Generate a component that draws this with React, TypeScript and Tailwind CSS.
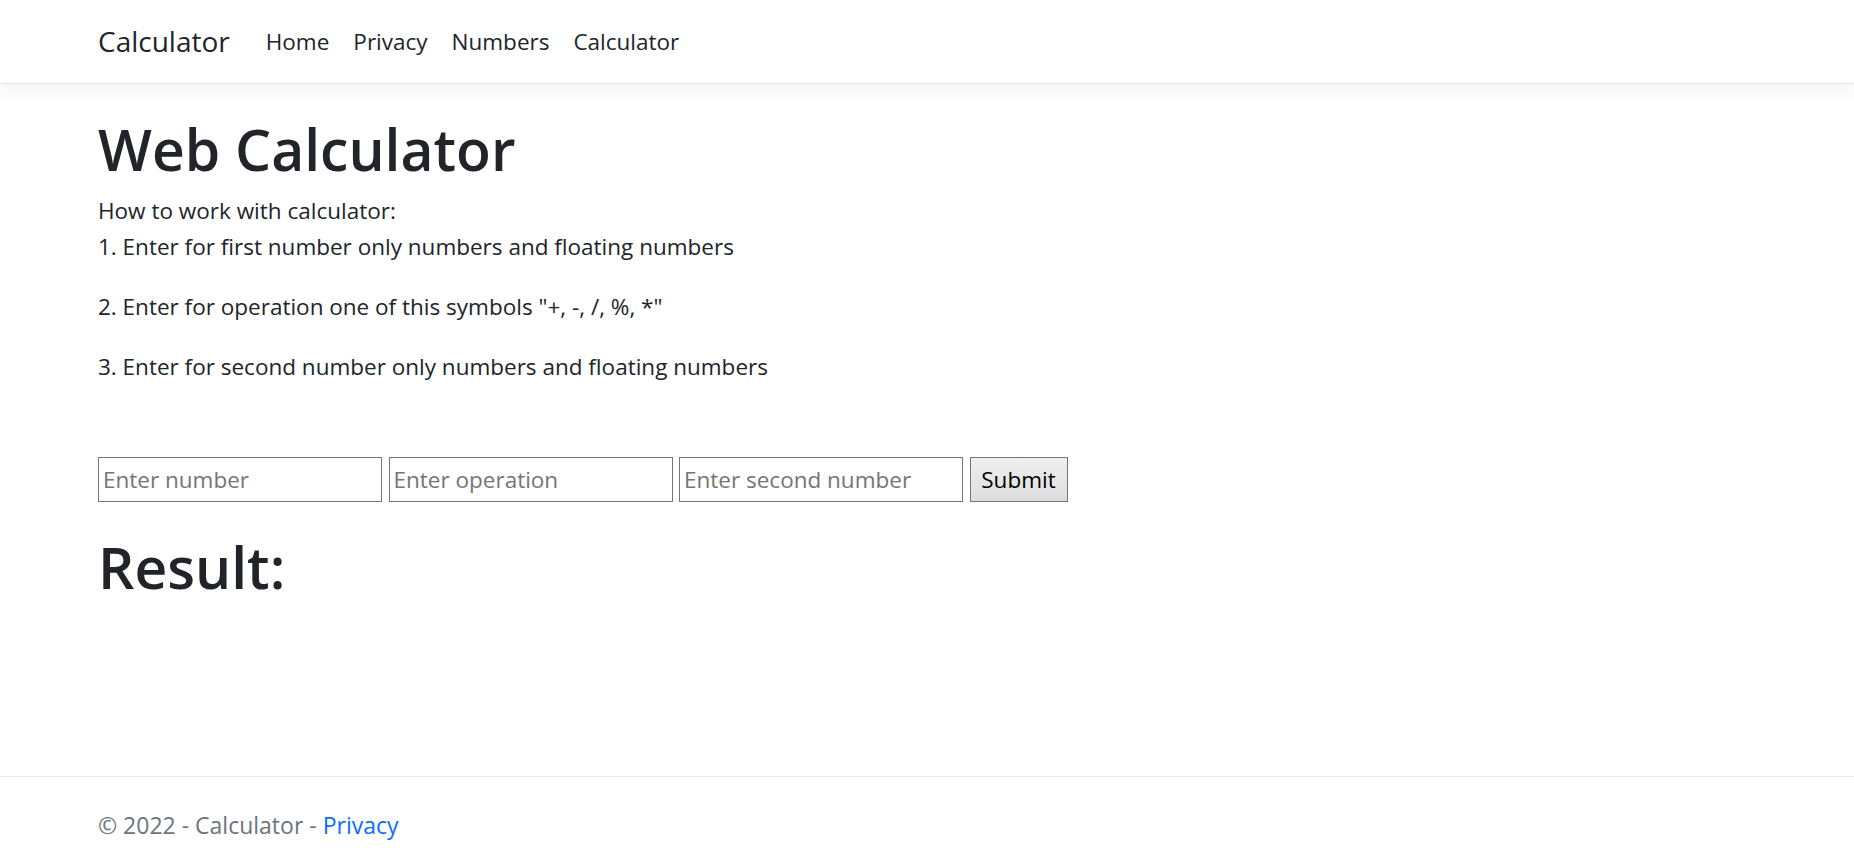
import React from "react";

export default function App() {
  return (
    <div className="flex min-h-[865px] flex-col bg-white text-[#212529] [font-family:'Open_Sans','Noto_Sans',sans-serif]">
      <header className="h-[84px] border-b border-[#e5e5e5] bg-white shadow-[0_6px_18px_rgba(0,0,0,0.05)]">
        <nav className="flex h-[83px] items-center pl-[98px]">
          <a href="#" className="mb-[2px] mr-[24px] text-[28px] leading-[42px] text-[#212529]">
            Calculator
          </a>
          <ul className="flex items-center">
            {["Home", "Privacy", "Numbers", "Calculator"].map((l) => (
              <li key={l}>
                <a href="#" className="block px-[12px] text-[22.5px] leading-[36px] text-[#212529]">
                  {l}
                </a>
              </li>
            ))}
          </ul>
        </nav>
      </header>

      <main className="pl-[98px] pt-[29px]">
        <h1 className="mb-[8px] text-[57px] font-semibold leading-[72px]">Web Calculator</h1>
        <div className="text-[22.5px] leading-[36px]">
          <p className="mb-[24px]">
            How to work with calculator:
            <br />
            1. Enter for first number only numbers and floating numbers
          </p>
          <p className="mb-[24px]">2. Enter for operation one of this symbols "+, -, /, %, *"</p>
          <p>3. Enter for second number only numbers and floating numbers</p>
        </div>
        <form className="mt-[72px] flex gap-[6.5px]" onSubmit={(e) => e.preventDefault()}>
          <input
            placeholder="Enter number"
            className="h-[45px] w-[284px] border-[1.5px] border-[#767676] px-[4px] text-[22.5px] text-black outline-none placeholder:text-[#757575]"
          />
          <input
            placeholder="Enter operation"
            className="h-[45px] w-[284px] border-[1.5px] border-[#767676] px-[4px] text-[22.5px] text-black outline-none placeholder:text-[#757575]"
          />
          <input
            placeholder="Enter second number"
            className="h-[45px] w-[284px] border-[1.5px] border-[#767676] px-[4px] text-[22.5px] text-black outline-none placeholder:text-[#757575]"
          />
          <button
            type="submit"
            className="h-[45px] w-[98px] border-[1.5px] border-[#767676] bg-gradient-to-b from-[#f0f0f0] to-[#dddddd] text-[22.5px] text-black"
          >
            Submit
          </button>
        </form>
        <h1 className="mt-[29px] text-[57px] font-semibold leading-[72px]">Result:</h1>
      </main>

      <footer className="mt-auto h-[89px] border-t border-[#e5e5e5] pl-[98px] pt-[5px] text-[23px] leading-[86px] text-[#6c757d]">
        © 2022 - Calculator - <a href="#" className="text-[#0d6efd]">Privacy</a>
      </footer>
    </div>
  );
}
